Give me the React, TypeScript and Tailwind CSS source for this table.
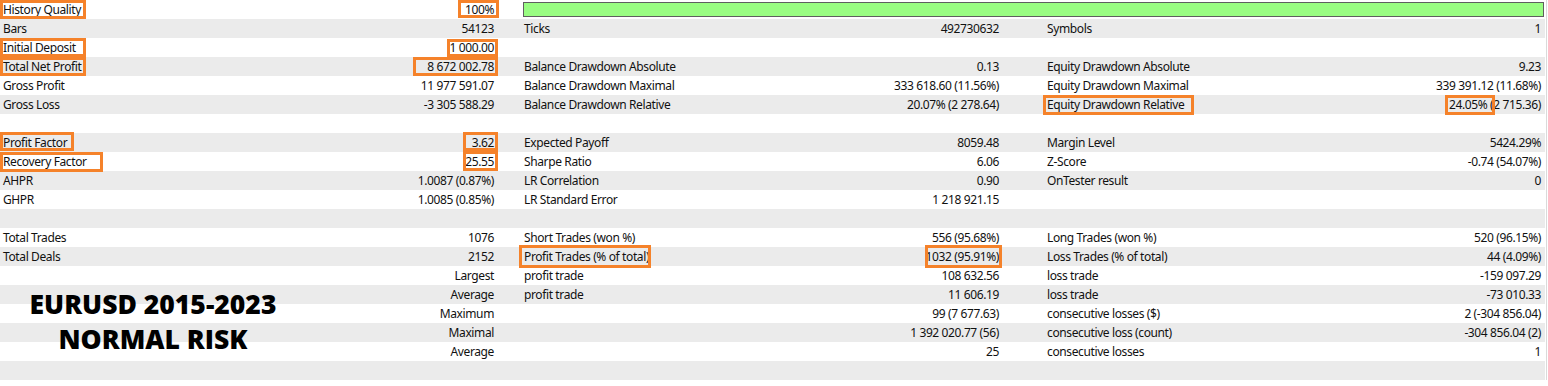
type Box = { left: number; width: number; top: number; height: number };

interface Row {
  cells: [string, string, string, string, string, string];
  boxes?: Box[];
  bar?: boolean;
}

const rows: Row[] = [
  { cells: ['History Quality', '100%', '', '', '', ''], bar: true, boxes: [{ left: 0, width: 86, top: 0, height: 19 }, { left: 458, width: 41, top: 0, height: 18 }] },
  { cells: ['Bars', '54123', 'Ticks', '492730632', 'Symbols', '1'] },
  { cells: ['Initial Deposit', '1 000.00', '', '', '', ''], boxes: [{ left: 0, width: 86, top: 0, height: 19 }, { left: 447, width: 51, top: 1, height: 18 }] },
  { cells: ['Total Net Profit', '8 672 002.78', 'Balance Drawdown Absolute', '0.13', 'Equity Drawdown Absolute', '9.23'], boxes: [{ left: 0, width: 86, top: 0, height: 19 }, { left: 413, width: 85, top: 0, height: 19 }] },
  { cells: ['Gross Profit', '11 977 591.07', 'Balance Drawdown Maximal', '333 618.60 (11.56%)', 'Equity Drawdown Maximal', '339 391.12 (11.68%)'] },
  { cells: ['Gross Loss', '-3 305 588.29', 'Balance Drawdown Relative', '20.07% (2 278.64)', 'Equity Drawdown Relative', '24.05% (2 715.36)'], boxes: [{ left: 1043, width: 151, top: 0, height: 20 }, { left: 1445, width: 50, top: 0, height: 20 }] },
  { cells: ['', '', '', '', '', ''] },
  { cells: ['Profit Factor', '3.62', 'Expected Payoff', '8059.48', 'Margin Level', '5424.29%'], boxes: [{ left: 0, width: 74, top: -1, height: 19 }, { left: 463, width: 35, top: -1, height: 19 }] },
  { cells: ['Recovery Factor', '25.55', 'Sharpe Ratio', '6.06', 'Z-Score', '-0.74 (54.07%)'], boxes: [{ left: 0, width: 103, top: 0, height: 20 }, { left: 463, width: 35, top: -1, height: 20 }] },
  { cells: ['AHPR', '1.0087 (0.87%)', 'LR Correlation', '0.90', 'OnTester result', '0'] },
  { cells: ['GHPR', '1.0085 (0.85%)', 'LR Standard Error', '1 218 921.15', '', ''] },
  { cells: ['', '', '', '', '', ''] },
  { cells: ['Total Trades', '1076', 'Short Trades (won %)', '556 (95.68%)', 'Long Trades (won %)', '520 (96.15%)'] },
  { cells: ['Total Deals', '2152', 'Profit Trades (% of total)', '1032 (95.91%)', 'Loss Trades (% of total)', '44 (4.09%)'], boxes: [{ left: 519, width: 132, top: -2, height: 23 }, { left: 925, width: 77, top: -2, height: 23 }] },
  { cells: ['', 'Largest', 'profit trade', '108 632.56', 'loss trade', '-159 097.29'] },
  { cells: ['', 'Average', 'profit trade', '11 606.19', 'loss trade', '-73 010.33'] },
  { cells: ['', 'Maximum', '', '99 (7 677.63)', 'consecutive losses ($)', '2 (-304 856.04)'] },
  { cells: ['', 'Maximal', '', '1 392 020.77 (56)', 'consecutive loss (count)', '-304 856.04 (2)'] },
  { cells: ['', 'Average', '', '25', 'consecutive losses', '1'] },
  { cells: ['', '', '', '', '', ''] },
];

function ReportRow({ row, index }: { row: Row; index: number }) {
  const [l1, v1, l2, v2, l3, v3] = row.cells;
  return (
    <div className={`relative flex h-[19px] leading-[19px] whitespace-nowrap ${index % 2 === 1 ? 'bg-[#ebebeb]' : 'bg-white'}`}>
      <div className="flex w-[497px] justify-between pl-[3px] pr-[3px]">
        <span>{l1}</span>
        <span>{v1}</span>
      </div>
      {row.bar ? (
        <div className="ml-[26px] mt-[2px] h-[15px] w-[1021px] border border-[#5f5f5f] bg-[#99fd82]" />
      ) : (
        <>
          <div className="flex w-[505px] justify-between pl-[27px] pr-[3px]">
            <span>{l2}</span>
            <span>{v2}</span>
          </div>
          <div className="flex w-[543px] justify-between pl-[45px] pr-[4px]">
            <span>{l3}</span>
            <span>{v3}</span>
          </div>
        </>
      )}
      {row.boxes?.map((b, i) => (
        <div
          key={i}
          className="absolute z-10 border-[3px] border-[#f5822a]"
          style={{ left: b.left, width: b.width, top: b.top, height: b.height }}
        />
      ))}
    </div>
  );
}

export default function App() {
  return (
    <div className="relative h-[386px] w-[1548px] overflow-hidden bg-white font-['Segoe_UI','Noto_Sans',sans-serif] text-[12px] tracking-[-0.38px] text-[#111]">
      <div className="flex">
        <div className="w-[1545px]">
          {rows.map((row, i) => (
            <ReportRow key={i} row={row} index={i} />
          ))}
        </div>
        <div className="ml-[1px] w-[1px] bg-[#dadada]" />
      </div>

      <div className="absolute left-[0px] top-[287px] z-20 w-[306px] text-center font-['Open_Sans',sans-serif] text-[26.5px] font-extrabold leading-[35px] tracking-normal text-black">
        <div>EURUSD 2015-2023</div>
        <div>NORMAL RISK</div>
      </div>
    </div>
  );
}
